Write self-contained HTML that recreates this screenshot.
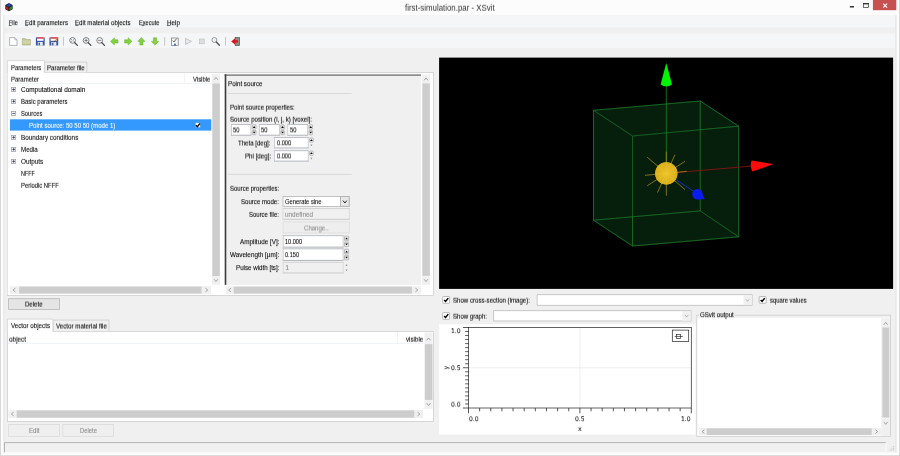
<!DOCTYPE html>
<html><head><meta charset="utf-8"><title>first-simulation.par - XSvit</title>
<style>
html,body{margin:0;padding:0;}
body{width:900px;height:456px;overflow:hidden;background:#f0f0f0;font-family:"Liberation Sans",sans-serif;}
#w{position:relative;width:900px;height:456px;overflow:hidden;background:#f0f0f0;}
.t{position:absolute;white-space:pre;line-height:10px;height:10px;-webkit-text-stroke:0.08px;}
.t span{display:inline-block;transform-origin:0 50%;}
#g{position:absolute;left:0;top:0;}
</style></head>
<body><div id="w">
<svg id="g" width="900" height="456" viewBox="0 0 900 456">
<rect x="0.00" y="0.00" width="900.00" height="15.40" fill="#fcfcfc"/>
<rect x="0.00" y="0.00" width="3.60" height="456.00" fill="#fcfcfc"/>
<rect x="896.30" y="0.00" width="3.70" height="456.00" fill="#fcfcfc"/>
<rect x="0.00" y="452.60" width="900.00" height="3.40" fill="#fcfcfc"/>
<rect x="0.00" y="0.00" width="0.80" height="456.00" fill="#cfcfcf"/>
<rect x="899.20" y="0.00" width="0.80" height="456.00" fill="#cfcfcf"/>
<rect x="0.00" y="455.30" width="900.00" height="0.70" fill="#cfcfcf"/>
<g transform="translate(8.95,7.1) scale(1.15)"><polygon points="0,-3.6 3.2,-1.8 3.2,1.8 0,3.6 -3.2,1.8 -3.2,-1.8" fill="#222"/><polygon points="0,-2.9 2.3,-1.6 0,-0.3 -2.3,-1.6" fill="#2346c8"/><polygon points="-2.6,-0.8 -0.5,0.5 -0.5,2.7 -2.6,1.4" fill="#c81e1e"/><polygon points="2.6,-0.8 0.5,0.5 0.5,2.7 2.6,1.4" fill="#19a519"/></g>
<rect x="872.90" y="0.00" width="23.40" height="10.20" fill="#c75050"/>
<path d="M883.2 3.7 L887.1 7.6 M887.1 3.7 L883.2 7.6" stroke="#fff" stroke-width="1.05" fill="none"/><rect x="863.4" y="3.6" width="5.2" height="3.8" fill="none" stroke="#333" stroke-width="0.7"/><rect x="863.1" y="3.1" width="5.8" height="1.3" fill="#333"/><rect x="849.9" y="6.0" width="4.1" height="1.5" fill="#333"/>
<rect x="3.60" y="15.40" width="892.70" height="12.20" fill="#f5f6f7"/>
<rect x="3.60" y="33.30" width="892.70" height="15.00" fill="#f5f6f7"/>
<rect x="3.20" y="15.40" width="1.40" height="437.20" fill="#eaeaea"/>
<rect x="895.00" y="15.40" width="1.80" height="437.20" fill="#e9e9e9"/>
<rect x="896.80" y="15.40" width="1.20" height="437.20" fill="#fcfcfc"/>
<rect x="8.80" y="25.45" width="2.80" height="0.60" fill="#222"/>
<rect x="25.10" y="25.45" width="2.90" height="0.60" fill="#222"/>
<rect x="75.40" y="25.45" width="2.90" height="0.60" fill="#222"/>
<rect x="141.60" y="25.45" width="2.80" height="0.60" fill="#222"/>
<rect x="166.90" y="25.45" width="3.50" height="0.60" fill="#222"/>
<path d="M9.6 37.6 h5.2 l2.2 2.2 v5.6 h-7.4z" fill="#fff" stroke="#9a9a9a" stroke-width="0.7"/><path d="M14.8 37.6 v2.2 h2.2" fill="none" stroke="#9a9a9a" stroke-width="0.6"/><path d="M22.4 38.6 h3 l0.8 1 h4.2 v5.4 h-8z" fill="#c6ca98" stroke="#a3a878" stroke-width="0.6"/><path d="M22.6 41.2 h7.8 M22.6 43 h7.8" stroke="#dfe2bd" stroke-width="0.7"/><rect x="35.90" y="37.2" width="8.8" height="8.4" rx="0.6" fill="#3a5cab"/><rect x="37.10" y="37.2" width="6.4" height="3.6" fill="#fff"/><rect x="37.10" y="37.2" width="6.4" height="1.5" fill="#e0333c"/><rect x="37.80" y="42.0" width="5.0" height="3.6" fill="#e6e9f1"/><rect x="38.60" y="42.7" width="1.3" height="2.5" fill="#44527a"/><rect x="49.40" y="37.2" width="8.8" height="8.4" rx="0.6" fill="#3a5cab"/><rect x="50.60" y="37.2" width="6.4" height="3.6" fill="#fff"/><rect x="50.60" y="37.2" width="6.4" height="1.5" fill="#e0333c"/><rect x="51.30" y="42.0" width="5.0" height="3.6" fill="#e6e9f1"/><rect x="52.10" y="42.7" width="1.3" height="2.5" fill="#44527a"/><path d="M54.6 41.6 L58.2 37.6" stroke="#c98a2b" stroke-width="1.3"/><path d="M54.2 42.2 L55.2 41.0" stroke="#333" stroke-width="1"/><rect x="63.2" y="37" width="0.7" height="8.6" fill="#b4b4b4"/><circle cx="72.60" cy="40.4" r="2.9" fill="#f4f6f8" stroke="#666" stroke-width="0.8"/><path d="M74.70 42.6 L77.40 45.4" stroke="#444" stroke-width="1.3" stroke-linecap="round"/><path d="M70.90 39 l1.2 1.2 M74.30 39 l-1.2 1.2 M70.90 41.9 l1.2 -1.2 M74.30 41.9 l-1.2 -1.2" stroke="#555" stroke-width="0.6"/><circle cx="86.10" cy="40.4" r="2.9" fill="#f4f6f8" stroke="#666" stroke-width="0.8"/><path d="M88.20 42.6 L90.90 45.4" stroke="#444" stroke-width="1.3" stroke-linecap="round"/><path d="M84.50 40.4 h3.2" stroke="#555" stroke-width="0.7"/><path d="M86.10 38.8 v3.2" stroke="#555" stroke-width="0.7"/><circle cx="99.70" cy="40.4" r="2.9" fill="#f4f6f8" stroke="#666" stroke-width="0.8"/><path d="M101.80 42.6 L104.50 45.4" stroke="#444" stroke-width="1.3" stroke-linecap="round"/><path d="M98.10 40.4 h3.2" stroke="#555" stroke-width="0.7"/><g transform="translate(114.4,41.4) rotate(0)"><path d="M-3.8 0 L0 -3.6 L0 -1.6 L3.6 -1.6 L3.6 1.6 L0 1.6 L0 3.6 Z" fill="#84d03e" stroke="#5cab25" stroke-width="0.45"/></g><g transform="translate(128.2,41.4) rotate(180)"><path d="M-3.8 0 L0 -3.6 L0 -1.6 L3.6 -1.6 L3.6 1.6 L0 1.6 L0 3.6 Z" fill="#84d03e" stroke="#5cab25" stroke-width="0.45"/></g><g transform="translate(141.4,41.4) rotate(90)"><path d="M-3.8 0 L0 -3.6 L0 -1.6 L3.6 -1.6 L3.6 1.6 L0 1.6 L0 3.6 Z" fill="#84d03e" stroke="#5cab25" stroke-width="0.45"/></g><g transform="translate(155.0,41.4) rotate(270)"><path d="M-3.8 0 L0 -3.6 L0 -1.6 L3.6 -1.6 L3.6 1.6 L0 1.6 L0 3.6 Z" fill="#84d03e" stroke="#5cab25" stroke-width="0.45"/></g><rect x="164.4" y="37" width="0.7" height="8.6" fill="#b4b4b4"/><rect x="171.6" y="38" width="6.6" height="7.4" fill="#f6f6f6" stroke="#777" stroke-width="0.7"/><path d="M172.8 40.6 l1.2 1.4 l2.6 -3.4" fill="none" stroke="#444" stroke-width="0.8"/><rect x="174.2" y="43.6" width="1.6" height="2.0" fill="#2a55c0"/><path d="M185.6 38.4 L191.4 41.4 L185.6 44.4 Z" fill="#ececec" stroke="#b0b0b0" stroke-width="0.7"/><rect x="199.4" y="39.0" width="4.8" height="4.8" fill="#dedede" stroke="#bdbdbd" stroke-width="0.6"/><circle cx="214.4" cy="40.0" r="2.5" fill="#eef2f6" stroke="#888" stroke-width="0.8"/><path d="M216.3 42 L219.4 45.2" stroke="#555" stroke-width="1.4" stroke-linecap="round"/><rect x="225.2" y="37" width="0.7" height="8.6" fill="#b4b4b4"/><rect x="235.2" y="37.6" width="4.2" height="7.8" fill="#8a8f86" stroke="#4c4c4c" stroke-width="0.7"/><path d="M231.2 41.4 L235 38.2 L235 40.2 L238 40.2 L238 42.6 L235 42.6 L235 44.6 Z" fill="#d9141e"/>
<rect x="7.00" y="72.20" width="426.70" height="223.50" fill="#fff"/><rect x="7.35" y="72.55" width="426.00" height="222.80" fill="none" stroke="#c7c7c7" stroke-width="0.7"/>
<rect x="44.40" y="61.70" width="42.80" height="10.60" fill="#f0f0f0"/><path d="M44.75 72.30 V62.05 H86.85 V72.30" fill="none" stroke="#c7c7c7" stroke-width="0.7"/>
<rect x="7.00" y="60.30" width="37.80" height="13.00" fill="#fff"/><path d="M7.35 73.30 V60.65 H44.45 V73.30" fill="none" stroke="#c7c7c7" stroke-width="0.7"/>
<rect x="7.70" y="72.90" width="212.50" height="222.10" fill="#fff"/>
<rect x="7.70" y="83.00" width="204.30" height="0.60" fill="#e6ecf3"/>
<rect x="184.50" y="73.50" width="0.60" height="9.50" fill="#e8edf3"/>
<rect x="11.25" y="87.15" width="4.80" height="4.70" fill="#fff"/><rect x="11.62" y="87.53" width="4.05" height="3.95" fill="none" stroke="#9d9d9d" stroke-width="0.75"/>
<path d="M12.30 89.50 h2.7" stroke="#1c2a55" stroke-width="0.75"/><path d="M13.65 88.15 v2.7" stroke="#1c2a55" stroke-width="0.75"/>
<rect x="11.25" y="99.05" width="4.80" height="4.70" fill="#fff"/><rect x="11.62" y="99.43" width="4.05" height="3.95" fill="none" stroke="#9d9d9d" stroke-width="0.75"/>
<path d="M12.30 101.40 h2.7" stroke="#1c2a55" stroke-width="0.75"/><path d="M13.65 100.05 v2.7" stroke="#1c2a55" stroke-width="0.75"/>
<rect x="11.25" y="111.05" width="4.80" height="4.70" fill="#fff"/><rect x="11.62" y="111.43" width="4.05" height="3.95" fill="none" stroke="#9d9d9d" stroke-width="0.75"/>
<path d="M12.30 113.40 h2.7" stroke="#1c2a55" stroke-width="0.75"/>
<rect x="10.00" y="119.30" width="201.30" height="11.30" fill="#3399ff"/>
<rect x="195.30" y="122.60" width="5.20" height="5.10" rx="0.7" fill="#fff" stroke="#3f92ec" stroke-width="0.8"/>
<path d="M195.90 125.30 L197.35 126.70 L200.00 123.35" fill="none" stroke="#000" stroke-width="1.3"/>
<rect x="11.25" y="135.05" width="4.80" height="4.70" fill="#fff"/><rect x="11.62" y="135.43" width="4.05" height="3.95" fill="none" stroke="#9d9d9d" stroke-width="0.75"/>
<path d="M12.30 137.40 h2.7" stroke="#1c2a55" stroke-width="0.75"/><path d="M13.65 136.05 v2.7" stroke="#1c2a55" stroke-width="0.75"/>
<rect x="11.25" y="147.05" width="4.80" height="4.70" fill="#fff"/><rect x="11.62" y="147.43" width="4.05" height="3.95" fill="none" stroke="#9d9d9d" stroke-width="0.75"/>
<path d="M12.30 149.40 h2.7" stroke="#1c2a55" stroke-width="0.75"/><path d="M13.65 148.05 v2.7" stroke="#1c2a55" stroke-width="0.75"/>
<rect x="11.25" y="159.05" width="4.80" height="4.70" fill="#fff"/><rect x="11.62" y="159.43" width="4.05" height="3.95" fill="none" stroke="#9d9d9d" stroke-width="0.75"/>
<path d="M12.30 161.40 h2.7" stroke="#1c2a55" stroke-width="0.75"/><path d="M13.65 160.05 v2.7" stroke="#1c2a55" stroke-width="0.75"/>
<rect x="212.00" y="74.00" width="8.00" height="210.80" fill="#f0f0f0"/>
<rect x="212.40" y="83.40" width="7.40" height="192.60" fill="#cdcdcd"/>
<path d="M214.10 79.78 L216.00 77.42 L217.90 79.78" fill="none" stroke="#a2a2a2" stroke-width="1.0"/><path d="M214.10 279.22 L216.00 281.58 L217.90 279.22" fill="none" stroke="#a2a2a2" stroke-width="1.0"/>
<rect x="10.00" y="286.30" width="201.00" height="7.50" fill="#f0f0f0"/>
<rect x="19.20" y="286.60" width="182.30" height="7.00" fill="#cdcdcd"/>
<path d="M15.38 288.15 L13.02 290.05 L15.38 291.95" fill="none" stroke="#a2a2a2" stroke-width="1.0"/><path d="M205.42 288.15 L207.78 290.05 L205.42 291.95" fill="none" stroke="#a2a2a2" stroke-width="1.0"/>
<rect x="220.20" y="72.90" width="4.40" height="222.10" fill="#fff"/>
<rect x="224.60" y="73.60" width="197.40" height="221.40" fill="#f0f0f0"/>
<rect x="224.60" y="74.30" width="196.40" height="1.70" fill="#8e8e8e"/>
<rect x="224.70" y="74.30" width="1.60" height="210.50" fill="#3c3c3c"/>
<rect x="421.00" y="73.60" width="1.00" height="211.40" fill="#fff"/>
<rect x="228.00" y="93.30" width="123.70" height="0.60" fill="#c9c9c9"/>
<rect x="231.00" y="124.00" width="20.30" height="11.80" fill="#fff"/><rect x="231.00" y="124.00" width="20.30" height="0.85" fill="#b1b4ba"/><rect x="231.00" y="134.70" width="20.30" height="1.1" fill="#b6b9bf"/><rect x="231.00" y="124.00" width="0.8" height="11.80" fill="#c0c3c9"/><rect x="250.50" y="124.00" width="0.8" height="11.80" fill="#c0c3c9"/>
<rect x="252.30" y="124.80" width="3.70" height="4.40" rx="0.5" fill="#eaeaea" stroke="#a6a6a6" stroke-width="0.7"/>
<rect x="252.30" y="130.50" width="3.70" height="4.20" rx="0.5" fill="#eaeaea" stroke="#a6a6a6" stroke-width="0.7"/>
<path d="M252.85 127.90 L254.15 126.10 L255.45 127.90Z" fill="#000"/><path d="M252.85 131.70 L254.15 133.50 L255.45 131.70Z" fill="#000"/>
<rect x="259.20" y="124.00" width="20.60" height="11.80" fill="#fff"/><rect x="259.20" y="124.00" width="20.60" height="0.85" fill="#b1b4ba"/><rect x="259.20" y="134.70" width="20.60" height="1.1" fill="#b6b9bf"/><rect x="259.20" y="124.00" width="0.8" height="11.80" fill="#c0c3c9"/><rect x="279.00" y="124.00" width="0.8" height="11.80" fill="#c0c3c9"/>
<rect x="280.80" y="124.80" width="3.50" height="4.40" rx="0.5" fill="#eaeaea" stroke="#a6a6a6" stroke-width="0.7"/>
<rect x="280.80" y="130.50" width="3.50" height="4.20" rx="0.5" fill="#eaeaea" stroke="#a6a6a6" stroke-width="0.7"/>
<path d="M281.25 127.90 L282.55 126.10 L283.85 127.90Z" fill="#000"/><path d="M281.25 131.70 L282.55 133.50 L283.85 131.70Z" fill="#000"/>
<rect x="287.40" y="124.00" width="20.60" height="11.80" fill="#fff"/><rect x="287.40" y="124.00" width="20.60" height="0.85" fill="#b1b4ba"/><rect x="287.40" y="134.70" width="20.60" height="1.1" fill="#b6b9bf"/><rect x="287.40" y="124.00" width="0.8" height="11.80" fill="#c0c3c9"/><rect x="307.20" y="124.00" width="0.8" height="11.80" fill="#c0c3c9"/>
<rect x="309.00" y="124.80" width="3.50" height="4.40" rx="0.5" fill="#eaeaea" stroke="#a6a6a6" stroke-width="0.7"/>
<rect x="309.00" y="130.50" width="3.50" height="4.20" rx="0.5" fill="#eaeaea" stroke="#a6a6a6" stroke-width="0.7"/>
<path d="M309.45 127.90 L310.75 126.10 L312.05 127.90Z" fill="#000"/><path d="M309.45 131.70 L310.75 133.50 L312.05 131.70Z" fill="#000"/>
<rect x="274.10" y="137.20" width="34.50" height="11.30" fill="#fff"/><rect x="274.10" y="137.20" width="34.50" height="0.85" fill="#b1b4ba"/><rect x="274.10" y="147.40" width="34.50" height="1.1" fill="#b6b9bf"/><rect x="274.10" y="137.20" width="0.8" height="11.30" fill="#c0c3c9"/><rect x="307.80" y="137.20" width="0.8" height="11.30" fill="#c0c3c9"/>
<rect x="309.60" y="138.00" width="3.60" height="4.15" rx="0.5" fill="#eaeaea" stroke="#a6a6a6" stroke-width="0.7"/>
<path d="M310.10 140.97 L311.40 139.17 L312.70 140.97Z" fill="#000"/><path d="M310.40 144.52 L311.40 146.32 L312.40 144.52Z" fill="#8e8e8e"/>
<rect x="274.10" y="150.30" width="34.50" height="11.40" fill="#fff"/><rect x="274.10" y="150.30" width="34.50" height="0.85" fill="#b1b4ba"/><rect x="274.10" y="160.60" width="34.50" height="1.1" fill="#b6b9bf"/><rect x="274.10" y="150.30" width="0.8" height="11.40" fill="#c0c3c9"/><rect x="307.80" y="150.30" width="0.8" height="11.40" fill="#c0c3c9"/>
<rect x="309.60" y="151.10" width="3.60" height="4.20" rx="0.5" fill="#eaeaea" stroke="#a6a6a6" stroke-width="0.7"/>
<path d="M310.10 154.10 L311.40 152.30 L312.70 154.10Z" fill="#000"/><path d="M310.40 157.70 L311.40 159.50 L312.40 157.70Z" fill="#8e8e8e"/>
<rect x="228.00" y="173.90" width="123.70" height="0.60" fill="#c9c9c9"/>
<rect x="282.60" y="196.00" width="67.10" height="10.80" fill="#fff"/><rect x="283.00" y="196.40" width="66.30" height="10.00" fill="none" stroke="#b2b2b2" stroke-width="0.8"/>
<rect x="340.20" y="196.30" width="9.30" height="10.30" fill="#e8e8e8"/><rect x="340.55" y="196.65" width="8.60" height="9.60" fill="none" stroke="#a4a4a4" stroke-width="0.7"/>
<path d="M343.00 200.62 L344.90 202.98 L346.80 200.62" fill="none" stroke="#222" stroke-width="1.0"/>
<rect x="282.60" y="208.20" width="67.10" height="11.70" fill="#f0f0f0"/><rect x="282.60" y="208.20" width="67.10" height="0.85" fill="#cfcfcf"/><rect x="282.60" y="218.80" width="67.10" height="1.1" fill="#cdcdcd"/><rect x="282.60" y="208.20" width="0.8" height="11.70" fill="#d6d6d6"/><rect x="348.90" y="208.20" width="0.8" height="11.70" fill="#d6d6d6"/>
<rect x="282.70" y="221.60" width="67.00" height="11.70" fill="#eeeeee"/><rect x="283.05" y="221.95" width="66.30" height="11.00" fill="none" stroke="#dadada" stroke-width="0.7"/>
<rect x="282.80" y="235.30" width="60.70" height="12.40" fill="#fff"/><rect x="282.80" y="235.30" width="60.70" height="0.85" fill="#b1b4ba"/><rect x="282.80" y="246.60" width="60.70" height="1.1" fill="#b6b9bf"/><rect x="282.80" y="235.30" width="0.8" height="12.40" fill="#c0c3c9"/><rect x="342.70" y="235.30" width="0.8" height="12.40" fill="#c0c3c9"/>
<rect x="344.50" y="236.10" width="4.10" height="4.70" rx="0.5" fill="#eaeaea" stroke="#a6a6a6" stroke-width="0.7"/>
<rect x="344.50" y="242.10" width="4.10" height="4.50" rx="0.5" fill="#eaeaea" stroke="#a6a6a6" stroke-width="0.7"/>
<path d="M345.25 239.35 L346.55 237.55 L347.85 239.35Z" fill="#000"/><path d="M345.25 243.45 L346.55 245.25 L347.85 243.45Z" fill="#000"/>
<rect x="282.80" y="248.40" width="60.70" height="12.60" fill="#fff"/><rect x="282.80" y="248.40" width="60.70" height="0.85" fill="#b1b4ba"/><rect x="282.80" y="259.90" width="60.70" height="1.1" fill="#b6b9bf"/><rect x="282.80" y="248.40" width="0.8" height="12.60" fill="#c0c3c9"/><rect x="342.70" y="248.40" width="0.8" height="12.60" fill="#c0c3c9"/>
<rect x="344.50" y="249.20" width="4.10" height="4.80" rx="0.5" fill="#eaeaea" stroke="#a6a6a6" stroke-width="0.7"/>
<rect x="344.50" y="255.30" width="4.10" height="4.60" rx="0.5" fill="#eaeaea" stroke="#a6a6a6" stroke-width="0.7"/>
<path d="M345.25 252.50 L346.55 250.70 L347.85 252.50Z" fill="#000"/><path d="M345.25 256.70 L346.55 258.50 L347.85 256.70Z" fill="#000"/>
<rect x="282.80" y="261.90" width="60.70" height="11.60" fill="#f0f0f0"/><rect x="282.80" y="261.90" width="60.70" height="0.85" fill="#cfcfcf"/><rect x="282.80" y="272.40" width="60.70" height="1.1" fill="#cdcdcd"/><rect x="282.80" y="261.90" width="0.8" height="11.60" fill="#d6d6d6"/><rect x="342.70" y="261.90" width="0.8" height="11.60" fill="#d6d6d6"/>
<path d="M345.55 265.75 L346.55 263.95 L347.55 265.75Z" fill="#8e8e8e"/><path d="M345.55 269.45 L346.55 271.25 L347.55 269.45Z" fill="#8e8e8e"/>
<rect x="422.00" y="73.60" width="11.00" height="221.40" fill="#fff"/>
<rect x="224.60" y="285.00" width="208.40" height="10.00" fill="#fff"/>
<rect x="422.00" y="74.50" width="8.00" height="210.30" fill="#f0f0f0"/>
<rect x="422.40" y="83.40" width="7.40" height="192.40" fill="#cdcdcd"/>
<path d="M424.10 80.28 L426.00 77.92 L427.90 80.28" fill="none" stroke="#a2a2a2" stroke-width="1.0"/><path d="M424.10 279.22 L426.00 281.58 L427.90 279.22" fill="none" stroke="#a2a2a2" stroke-width="1.0"/>
<rect x="225.60" y="286.30" width="195.40" height="7.50" fill="#f0f0f0"/>
<rect x="233.70" y="286.60" width="178.30" height="7.00" fill="#cdcdcd"/>
<path d="M230.98 288.15 L228.62 290.05 L230.98 291.95" fill="none" stroke="#a2a2a2" stroke-width="1.0"/><path d="M415.42 288.15 L417.78 290.05 L415.42 291.95" fill="none" stroke="#a2a2a2" stroke-width="1.0"/>
<rect x="8.30" y="298.40" width="51.40" height="11.30" fill="#e5e5e5"/><rect x="8.65" y="298.75" width="50.70" height="10.60" fill="none" stroke="#b0b0b0" stroke-width="0.7"/>
<rect x="7.00" y="331.00" width="426.90" height="90.80" fill="#fff"/><rect x="7.35" y="331.35" width="426.20" height="90.10" fill="none" stroke="#c7c7c7" stroke-width="0.7"/>
<rect x="52.80" y="319.70" width="56.50" height="11.40" fill="#f0f0f0"/><path d="M53.15 331.10 V320.05 H108.95 V331.10" fill="none" stroke="#c7c7c7" stroke-width="0.7"/>
<rect x="7.00" y="318.70" width="46.20" height="13.40" fill="#fff"/><path d="M7.35 332.10 V319.05 H52.85 V332.10" fill="none" stroke="#c7c7c7" stroke-width="0.7"/>
<rect x="7.70" y="343.10" width="416.80" height="0.60" fill="#e6ecf3"/>
<rect x="397.30" y="332.00" width="0.60" height="11.10" fill="#e8edf3"/>
<rect x="424.50" y="332.50" width="8.10" height="76.30" fill="#f0f0f0"/>
<rect x="424.90" y="344.20" width="7.50" height="55.70" fill="#cdcdcd"/>
<path d="M426.65 340.28 L428.55 337.92 L430.45 340.28" fill="none" stroke="#a2a2a2" stroke-width="1.0"/><path d="M426.65 403.22 L428.55 405.58 L430.45 403.22" fill="none" stroke="#a2a2a2" stroke-width="1.0"/>
<rect x="8.30" y="410.10" width="414.80" height="7.80" fill="#f0f0f0"/>
<rect x="16.70" y="410.40" width="397.50" height="7.30" fill="#cdcdcd"/>
<path d="M13.68 412.10 L11.32 414.00 L13.68 415.90" fill="none" stroke="#a2a2a2" stroke-width="1.0"/><path d="M417.52 412.10 L419.88 414.00 L417.52 415.90" fill="none" stroke="#a2a2a2" stroke-width="1.0"/>
<rect x="8.30" y="424.20" width="51.40" height="12.50" fill="#efefef"/><rect x="8.65" y="424.55" width="50.70" height="11.80" fill="none" stroke="#d9d9d9" stroke-width="0.7"/>
<rect x="62.50" y="424.20" width="51.30" height="12.50" fill="#efefef"/><rect x="62.85" y="424.55" width="50.60" height="11.80" fill="none" stroke="#d9d9d9" stroke-width="0.7"/>
<path d="M4.5 452.4 V442.6 H886" fill="none" stroke="#a5a5a5" stroke-width="0.8"/><path d="M4.5 452.3 H886 V442.6" fill="none" stroke="#fbfbfb" stroke-width="0.8"/>
<rect x="893.3" y="446.0" width="0.9" height="0.9" fill="#b8b8b8"/><rect x="893.3" y="447.8" width="0.9" height="0.9" fill="#b8b8b8"/><rect x="893.3" y="449.6" width="0.9" height="0.9" fill="#b8b8b8"/><rect x="891.5" y="447.8" width="0.9" height="0.9" fill="#b8b8b8"/><rect x="891.5" y="449.6" width="0.9" height="0.9" fill="#b8b8b8"/><rect x="889.7" y="449.6" width="0.9" height="0.9" fill="#b8b8b8"/>
<rect x="439.10" y="57.60" width="454.00" height="231.30" fill="#000"/>
<defs><radialGradient id="sg" cx="0.5" cy="0.5" r="0.5"><stop offset="0" stop-color="#ecc428" stop-opacity="0.9"/><stop offset="1" stop-color="#d9ae1c" stop-opacity="0.9"/></radialGradient></defs><polygon points="593.5,110.3 700.2,101.0 738.7,126.2 738.7,236.8 632.5,246.0 593.5,220.2" fill="#06190b" stroke="none" stroke-width="0.6" fill-opacity="1" stroke-linejoin="round"/><polygon points="593.5,110.3 700.2,101.0 738.7,126.2 632.5,136.0" fill="#0a2a12" stroke="#1c7a2b" stroke-width="0.55" fill-opacity="0.18" stroke-linejoin="round"/><polygon points="593.5,220.2 700.2,210.9 738.7,236.8 632.5,246.0" fill="#0a2a12" stroke="#1c7a2b" stroke-width="0.55" fill-opacity="0.18" stroke-linejoin="round"/><polygon points="593.5,110.3 632.5,136.0 632.5,246.0 593.5,220.2" fill="#0a2a12" stroke="#1c7a2b" stroke-width="0.55" fill-opacity="0.18" stroke-linejoin="round"/><polygon points="700.2,101.0 738.7,126.2 738.7,236.8 700.2,210.9" fill="#0a2a12" stroke="#1c7a2b" stroke-width="0.55" fill-opacity="0.18" stroke-linejoin="round"/><polygon points="632.5,136.0 738.7,126.2 738.7,236.8 632.5,246.0" fill="#0a2a12" stroke="#1c7a2b" stroke-width="0.55" fill-opacity="0.18" stroke-linejoin="round"/><polygon points="593.5,110.3 700.2,101.0 700.2,210.9 593.5,220.2" fill="#0a2a12" stroke="#1c7a2b" stroke-width="0.55" fill-opacity="0.18" stroke-linejoin="round"/><path d="M666.3 173.4 L666.3 85" stroke="#0c8a12" stroke-width="0.8"/><path d="M666.3 63.0 L660.6 84.6 Q666.3 88.6 672.0 84.6 Z" fill="#00f400"/><path d="M666.3 173.4 L751.5 166.1" stroke="#9a1010" stroke-width="0.8"/><path d="M773.4 164.1 L751.6 160.4 Q749.6 166 752.4 171.6 Z" fill="#ff0a0a"/><path d="M666.3 173.4 L695 192.2" stroke="#1030c0" stroke-width="1.0"/><circle cx="697.4" cy="194.2" r="5.2" fill="#0a1cf0"/><path d="M704.8 198.9 L700.6 190.2 L696.8 199.4 Z" fill="#0a1cf0"/><path d="M666.3 173.4 L647.2 157.2" stroke="#b8941a" stroke-width="0.7"/><path d="M666.3 173.4 L685.0 189.7" stroke="#b8941a" stroke-width="0.7"/><path d="M666.3 173.4 L666.3 151.7" stroke="#b8941a" stroke-width="0.7"/><path d="M666.3 173.4 L666.3 195.8" stroke="#b8941a" stroke-width="0.7"/><path d="M666.3 173.4 L675.0 154.7" stroke="#b8941a" stroke-width="0.7"/><path d="M666.3 173.4 L657.5 192.5" stroke="#b8941a" stroke-width="0.7"/><path d="M666.3 173.4 L685.0 161.3" stroke="#b8941a" stroke-width="0.7"/><path d="M666.3 173.4 L647.2 185.8" stroke="#b8941a" stroke-width="0.7"/><path d="M666.3 173.4 L686.7 171.3" stroke="#b8941a" stroke-width="0.7"/><path d="M666.3 173.4 L645.0 175.3" stroke="#b8941a" stroke-width="0.7"/><circle cx="666.3" cy="173.4" r="11.1" fill="#e3b81f"/><circle cx="666.3" cy="173.4" r="11.1" fill="url(#sg)"/><path d="M666.3 173.4 L656.8 165.3" stroke="#f0cc3c" stroke-width="0.6" stroke-opacity="0.55"/><path d="M666.3 173.4 L675.6 181.6" stroke="#f0cc3c" stroke-width="0.6" stroke-opacity="0.55"/><path d="M666.3 173.4 L666.3 162.6" stroke="#f0cc3c" stroke-width="0.6" stroke-opacity="0.55"/><path d="M666.3 173.4 L666.3 184.6" stroke="#f0cc3c" stroke-width="0.6" stroke-opacity="0.55"/><path d="M666.3 173.4 L670.6 164.1" stroke="#f0cc3c" stroke-width="0.6" stroke-opacity="0.55"/><path d="M666.3 173.4 L661.9 183.0" stroke="#f0cc3c" stroke-width="0.6" stroke-opacity="0.55"/><path d="M666.3 173.4 L675.6 167.3" stroke="#f0cc3c" stroke-width="0.6" stroke-opacity="0.55"/><path d="M666.3 173.4 L656.8 179.6" stroke="#f0cc3c" stroke-width="0.6" stroke-opacity="0.55"/><path d="M666.3 173.4 L676.5 172.3" stroke="#f0cc3c" stroke-width="0.6" stroke-opacity="0.55"/><path d="M666.3 173.4 L655.6 174.3" stroke="#f0cc3c" stroke-width="0.6" stroke-opacity="0.55"/>
<rect x="442.70" y="296.50" width="6.90" height="6.80" rx="0.7" fill="#fff" stroke="#ababab" stroke-width="0.8"/>
<path d="M444.15 300.05 L445.60 301.45 L448.25 298.10" fill="none" stroke="#000" stroke-width="1.5"/>
<rect x="536.70" y="294.30" width="215.80" height="11.40" fill="#fff"/><rect x="537.10" y="294.70" width="215.00" height="10.60" fill="none" stroke="#b9b9b9" stroke-width="0.8"/>
<rect x="743.50" y="295.20" width="8.30" height="9.70" fill="#f0f0f0"/>
<path d="M745.90 299.15 L747.60 301.25 L749.30 299.15" fill="none" stroke="#a0a0a0" stroke-width="0.7"/>
<rect x="759.20" y="296.50" width="6.90" height="6.80" rx="0.7" fill="#fff" stroke="#ababab" stroke-width="0.8"/>
<path d="M760.65 300.05 L762.10 301.45 L764.75 298.10" fill="none" stroke="#000" stroke-width="1.5"/>
<rect x="442.70" y="312.60" width="6.90" height="6.70" rx="0.7" fill="#fff" stroke="#ababab" stroke-width="0.8"/>
<path d="M444.15 316.10 L445.60 317.50 L448.25 314.15" fill="none" stroke="#000" stroke-width="1.5"/>
<rect x="493.30" y="310.30" width="198.10" height="11.10" fill="#fff"/><rect x="493.70" y="310.70" width="197.30" height="10.30" fill="none" stroke="#b9b9b9" stroke-width="0.8"/>
<rect x="682.50" y="311.00" width="8.20" height="9.70" fill="#f0f0f0"/>
<path d="M684.90 314.95 L686.60 317.05 L688.30 314.95" fill="none" stroke="#a0a0a0" stroke-width="0.7"/>
<rect x="439.10" y="324.20" width="256.50" height="110.30" fill="#fff"/>
<path d="M579.90 327.5 V408.0 M468.5 367.75 H691.3" stroke="#e6e6e6" stroke-width="0.6"/><rect x="468.5" y="327.5" width="222.79999999999995" height="80.5" fill="none" stroke="#2e2e2e" stroke-width="0.75"/><path d="M468.5 327.50 h-5.6 M468.50 408.0 v5.3 M468.5 331.52 h-3.3 M479.64 408.0 v3.3 M468.5 335.55 h-3.3 M490.78 408.0 v3.3 M468.5 339.57 h-3.3 M501.92 408.0 v3.3 M468.5 343.60 h-3.3 M513.06 408.0 v3.3 M468.5 347.62 h-3.3 M524.20 408.0 v3.3 M468.5 351.65 h-3.3 M535.34 408.0 v3.3 M468.5 355.68 h-3.3 M546.48 408.0 v3.3 M468.5 359.70 h-3.3 M557.62 408.0 v3.3 M468.5 363.73 h-3.3 M568.76 408.0 v3.3 M468.5 367.75 h-5.6 M579.90 408.0 v5.3 M468.5 371.77 h-3.3 M591.04 408.0 v3.3 M468.5 375.80 h-3.3 M602.18 408.0 v3.3 M468.5 379.82 h-3.3 M613.32 408.0 v3.3 M468.5 383.85 h-3.3 M624.46 408.0 v3.3 M468.5 387.88 h-3.3 M635.60 408.0 v3.3 M468.5 391.90 h-3.3 M646.74 408.0 v3.3 M468.5 395.93 h-3.3 M657.88 408.0 v3.3 M468.5 399.95 h-3.3 M669.02 408.0 v3.3 M468.5 403.98 h-3.3 M680.16 408.0 v3.3 M468.5 408.00 h-5.6 M691.30 408.0 v5.3" stroke="#222" stroke-width="0.75" fill="none"/><rect x="672.3" y="330.1" width="16.4" height="11.5" fill="#fff" stroke="#222" stroke-width="0.7"/><rect x="676.55" y="334.45" width="3.9" height="3.9" fill="none" stroke="#2a2a2a" stroke-width="0.7"/><path d="M674.8 336.45 h8" stroke="#2a2a2a" stroke-width="0.7"/>
<rect x="696.85" y="315.15" width="193.60" height="121.10" fill="none" stroke="#c7c7c7" stroke-width="0.7"/>
<rect x="697.40" y="317.80" width="192.60" height="118.10" fill="#fff"/>
<rect x="699.20" y="313.00" width="35.00" height="4.00" fill="#f0f0f0"/>
<rect x="881.20" y="318.30" width="8.80" height="117.60" fill="#f0f0f0"/>
<rect x="882.00" y="319.00" width="7.40" height="108.50" fill="#f0f0f0"/>
<rect x="882.40" y="327.50" width="6.80" height="90.00" fill="#cdcdcd"/>
<path d="M883.80 324.78 L885.70 322.42 L887.60 324.78" fill="none" stroke="#a2a2a2" stroke-width="1.0"/><path d="M883.80 421.92 L885.70 424.28 L887.60 421.92" fill="none" stroke="#a2a2a2" stroke-width="1.0"/>
<rect x="699.00" y="428.00" width="182.00" height="7.20" fill="#f0f0f0"/>
<rect x="706.70" y="428.30" width="165.00" height="6.70" fill="#cdcdcd"/>
<path d="M704.38 429.70 L702.02 431.60 L704.38 433.50" fill="none" stroke="#a2a2a2" stroke-width="1.0"/><path d="M875.42 429.70 L877.78 431.60 L875.42 433.50" fill="none" stroke="#a2a2a2" stroke-width="1.0"/>
</svg>
<div class="t" style="left:405px;top:2px;padding-left:0.35px;font-size:8.6px;color:#333;transform:translate3d(0,0.69px,0) rotateX(0.5deg);-webkit-text-stroke:0;"><span style="transform:scaleX(0.9162)">first-simulation.par - XSvit</span></div>
<div class="t" style="left:8px;top:18px;padding-left:0.70px;font-size:7.0px;color:#000;transform:translate3d(0,0.17px,0) rotateX(0.5deg);"><span style="transform:scaleX(0.7801)">File</span></div>
<div class="t" style="left:25px;top:18px;padding-left:0.00px;font-size:7.0px;color:#000;transform:translate3d(0,0.17px,0) rotateX(0.5deg);"><span style="transform:scaleX(0.8701)">Edit parameters</span></div>
<div class="t" style="left:75px;top:18px;padding-left:0.30px;font-size:7.0px;color:#000;transform:translate3d(0,0.17px,0) rotateX(0.5deg);"><span style="transform:scaleX(0.8805)">Edit material objects</span></div>
<div class="t" style="left:138px;top:18px;padding-left:0.70px;font-size:7.0px;color:#000;transform:translate3d(0,0.17px,0) rotateX(0.5deg);"><span style="transform:scaleX(0.8104)">Execute</span></div>
<div class="t" style="left:166px;top:18px;padding-left:0.70px;font-size:7.0px;color:#000;transform:translate3d(0,0.17px,0) rotateX(0.5deg);"><span style="transform:scaleX(0.9024)">Help</span></div>
<div class="t" style="left:11px;top:63px;padding-left:0.00px;font-size:7.0px;color:#000;transform:translate3d(0,0.17px,0) rotateX(0.5deg);"><span style="transform:scaleX(0.8373)">Parameters</span></div>
<div class="t" style="left:47px;top:63px;padding-left:0.30px;font-size:7.0px;color:#000;transform:translate3d(0,0.27px,0) rotateX(0.5deg);"><span style="transform:scaleX(0.8651)">Parameter file</span></div>
<div class="t" style="left:10px;top:74px;padding-left:0.70px;font-size:7.0px;color:#000;transform:translate3d(0,0.67px,0) rotateX(0.5deg);"><span style="transform:scaleX(0.8566)">Parameter</span></div>
<div class="t" style="left:193px;top:74px;padding-left:0.00px;font-size:7.0px;color:#000;transform:translate3d(0,0.67px,0) rotateX(0.5deg);"><span style="transform:scaleX(0.8439)">Visible</span></div>
<div class="t" style="left:20px;top:84px;padding-left:0.70px;font-size:7.0px;color:#000;transform:translate3d(0,0.97px,0) rotateX(0.5deg);"><span style="transform:scaleX(0.9180)">Computational domain</span></div>
<div class="t" style="left:20px;top:96px;padding-left:0.70px;font-size:7.0px;color:#000;transform:translate3d(0,0.87px,0) rotateX(0.5deg);"><span style="transform:scaleX(0.8555)">Basic parameters</span></div>
<div class="t" style="left:20px;top:108px;padding-left:0.70px;font-size:7.0px;color:#000;transform:translate3d(0,0.87px,0) rotateX(0.5deg);"><span style="transform:scaleX(0.8292)">Sources</span></div>
<div class="t" style="left:28px;top:120px;padding-left:0.70px;font-size:7.0px;color:#fff;transform:translate3d(0,0.87px,0) rotateX(0.5deg);"><span style="transform:scaleX(0.8629)">Point source: 50 50 50 (mode 1)</span></div>
<div class="t" style="left:20px;top:132px;padding-left:0.70px;font-size:7.0px;color:#000;transform:translate3d(0,0.87px,0) rotateX(0.5deg);"><span style="transform:scaleX(0.9033)">Boundary conditions</span></div>
<div class="t" style="left:20px;top:144px;padding-left:0.70px;font-size:7.0px;color:#000;transform:translate3d(0,0.87px,0) rotateX(0.5deg);"><span style="transform:scaleX(0.8806)">Media</span></div>
<div class="t" style="left:20px;top:156px;padding-left:0.70px;font-size:7.0px;color:#000;transform:translate3d(0,0.87px,0) rotateX(0.5deg);"><span style="transform:scaleX(0.9096)">Outputs</span></div>
<div class="t" style="left:20px;top:168px;padding-left:0.70px;font-size:7.0px;color:#000;transform:translate3d(0,0.87px,0) rotateX(0.5deg);"><span style="transform:scaleX(0.7714)">NFFF</span></div>
<div class="t" style="left:20px;top:180px;padding-left:0.70px;font-size:7.0px;color:#000;transform:translate3d(0,0.77px,0) rotateX(0.5deg);"><span style="transform:scaleX(0.8377)">Periodic NFFF</span></div>
<div class="t" style="left:228px;top:79px;padding-left:0.00px;font-size:7.0px;color:#000;transform:translate3d(0,0.17px,0) rotateX(0.5deg);"><span style="transform:scaleX(0.8864)">Point source</span></div>
<div class="t" style="left:230px;top:102px;padding-left:0.00px;font-size:7.0px;color:#000;transform:translate3d(0,0.67px,0) rotateX(0.5deg);"><span style="transform:scaleX(0.8751)">Point source properties:</span></div>
<div class="t" style="left:230px;top:114px;padding-left:0.00px;font-size:7.0px;color:#000;transform:translate3d(0,0.67px,0) rotateX(0.5deg);"><span style="transform:scaleX(0.8782)">Source position (i, j, k) [voxel]:</span></div>
<div class="t" style="left:233px;top:125px;padding-left:0.10px;font-size:7.0px;color:#000;transform:translate3d(0,0.32px,0) rotateX(0.5deg);"><span style="transform:scaleX(0.8208)">50</span></div>
<div class="t" style="left:261px;top:125px;padding-left:0.30px;font-size:7.0px;color:#000;transform:translate3d(0,0.32px,0) rotateX(0.5deg);"><span style="transform:scaleX(0.8208)">50</span></div>
<div class="t" style="left:289px;top:125px;padding-left:0.50px;font-size:7.0px;color:#000;transform:translate3d(0,0.32px,0) rotateX(0.5deg);"><span style="transform:scaleX(0.8208)">50</span></div>
<div class="t" style="left:238px;top:138px;padding-left:0.30px;font-size:7.0px;color:#000;transform:translate3d(0,0.47px,0) rotateX(0.5deg);"><span style="transform:scaleX(0.8699)">Theta [deg]:</span></div>
<div class="t" style="left:276px;top:138px;padding-left:0.80px;font-size:7.0px;color:#000;transform:translate3d(0,0.27px,0) rotateX(0.5deg);"><span style="transform:scaleX(0.8043)">0.000</span></div>
<div class="t" style="left:244px;top:151px;padding-left:0.70px;font-size:7.0px;color:#000;transform:translate3d(0,0.47px,0) rotateX(0.5deg);"><span style="transform:scaleX(0.8824)">Phi [deg]:</span></div>
<div class="t" style="left:276px;top:151px;padding-left:0.80px;font-size:7.0px;color:#000;transform:translate3d(0,0.42px,0) rotateX(0.5deg);"><span style="transform:scaleX(0.8043)">0.000</span></div>
<div class="t" style="left:230px;top:183px;padding-left:0.00px;font-size:7.0px;color:#000;transform:translate3d(0,0.77px,0) rotateX(0.5deg);"><span style="transform:scaleX(0.8601)">Source properties:</span></div>
<div class="t" style="left:241px;top:197px;padding-left:0.30px;font-size:7.0px;color:#000;transform:translate3d(0,0.07px,0) rotateX(0.5deg);"><span style="transform:scaleX(0.8694)">Source mode:</span></div>
<div class="t" style="left:284px;top:197px;padding-left:0.70px;font-size:7.0px;color:#000;transform:translate3d(0,0.07px,0) rotateX(0.5deg);"><span style="transform:scaleX(0.8321)">Generate sine</span></div>
<div class="t" style="left:249px;top:209px;padding-left:0.30px;font-size:7.0px;color:#000;transform:translate3d(0,0.87px,0) rotateX(0.5deg);"><span style="transform:scaleX(0.8535)">Source file:</span></div>
<div class="t" style="left:284px;top:209px;padding-left:0.90px;font-size:7.0px;color:#8a8a8a;transform:translate3d(0,0.77px,0) rotateX(0.5deg);"><span style="transform:scaleX(0.9134)">undefined</span></div>
<div class="t" style="left:303px;top:223px;padding-left:0.70px;font-size:7.0px;color:#8a8a8a;transform:translate3d(0,0.47px,0) rotateX(0.5deg);"><span style="transform:scaleX(0.8655)">Change..</span></div>
<div class="t" style="left:239px;top:237px;padding-left:0.70px;font-size:7.0px;color:#000;transform:translate3d(0,0.17px,0) rotateX(0.5deg);"><span style="transform:scaleX(0.9064)">Amplitude [V]:</span></div>
<div class="t" style="left:285px;top:236px;padding-left:0.20px;font-size:7.0px;color:#000;transform:translate3d(0,0.92px,0) rotateX(0.5deg);"><span style="transform:scaleX(0.7936)">10.000</span></div>
<div class="t" style="left:230px;top:250px;padding-left:0.00px;font-size:7.0px;color:#000;transform:translate3d(0,0.07px,0) rotateX(0.5deg);"><span style="transform:scaleX(0.9051)">Wavelength [µm]:</span></div>
<div class="t" style="left:285px;top:250px;padding-left:0.20px;font-size:7.0px;color:#000;transform:translate3d(0,0.12px,0) rotateX(0.5deg);"><span style="transform:scaleX(0.7986)">0.150</span></div>
<div class="t" style="left:235px;top:263px;padding-left:0.80px;font-size:7.0px;color:#000;transform:translate3d(0,0.07px,0) rotateX(0.5deg);"><span style="transform:scaleX(0.8851)">Pulse width [ts]:</span></div>
<div class="t" style="left:285px;top:263px;padding-left:0.20px;font-size:7.0px;color:#8a8a8a;transform:translate3d(0,0.12px,0) rotateX(0.5deg);">1</div>
<div class="t" style="left:25px;top:299px;padding-left:0.00px;font-size:7.0px;color:#000;transform:translate3d(0,0.52px,0) rotateX(0.5deg);"><span style="transform:scaleX(0.8649)">Delete</span></div>
<div class="t" style="left:11px;top:321px;padding-left:0.00px;font-size:7.0px;color:#000;transform:translate3d(0,0.07px,0) rotateX(0.5deg);"><span style="transform:scaleX(0.8870)">Vector objects</span></div>
<div class="t" style="left:55px;top:321px;padding-left:0.80px;font-size:7.0px;color:#000;transform:translate3d(0,0.47px,0) rotateX(0.5deg);"><span style="transform:scaleX(0.8838)">Vector material file</span></div>
<div class="t" style="left:8px;top:334px;padding-left:0.70px;font-size:7.0px;color:#000;transform:translate3d(0,0.67px,0) rotateX(0.5deg);"><span style="transform:scaleX(0.9151)">object</span></div>
<div class="t" style="left:405px;top:334px;padding-left:0.80px;font-size:7.0px;color:#000;transform:translate3d(0,0.67px,0) rotateX(0.5deg);"><span style="transform:scaleX(0.8842)">visible</span></div>
<div class="t" style="left:28px;top:425px;padding-left:0.70px;font-size:7.0px;color:#8a8a8a;transform:translate3d(0,0.92px,0) rotateX(0.5deg);"><span style="transform:scaleX(0.8705)">Edit</span></div>
<div class="t" style="left:79px;top:425px;padding-left:0.70px;font-size:7.0px;color:#8a8a8a;transform:translate3d(0,0.92px,0) rotateX(0.5deg);"><span style="transform:scaleX(0.8402)">Delete</span></div>
<div class="t" style="left:453px;top:295px;padding-left:0.00px;font-size:7.0px;color:#000;transform:translate3d(0,0.67px,0) rotateX(0.5deg);"><span style="transform:scaleX(0.8719)">Show cross-section (image):</span></div>
<div class="t" style="left:769px;top:295px;padding-left:0.70px;font-size:7.0px;color:#000;transform:translate3d(0,0.67px,0) rotateX(0.5deg);"><span style="transform:scaleX(0.8396)">square values</span></div>
<div class="t" style="left:453px;top:311px;padding-left:0.00px;font-size:7.0px;color:#000;transform:translate3d(0,0.67px,0) rotateX(0.5deg);"><span style="transform:scaleX(0.8649)">Show graph:</span></div>
<div class="t" style="left:450px;top:326px;padding-left:0.80px;font-size:6.4px;color:#1c1c1c;font-family:&quot;DejaVu Sans&quot;, sans-serif;transform:translate3d(0,0.07px,0) rotateX(0.5deg);"><span style="transform:scaleX(0.9438)">1.0</span></div>
<div class="t" style="left:451px;top:363px;padding-left:0.00px;font-size:6.4px;color:#1c1c1c;font-family:&quot;DejaVu Sans&quot;, sans-serif;transform:translate3d(0,0.07px,0) rotateX(0.5deg);"><span style="transform:scaleX(0.9438)">0.5</span></div>
<div class="t" style="left:451px;top:399px;padding-left:0.00px;font-size:6.4px;color:#1c1c1c;font-family:&quot;DejaVu Sans&quot;, sans-serif;transform:translate3d(0,0.57px,0) rotateX(0.5deg);"><span style="transform:scaleX(0.9438)">0.0</span></div>
<div class="t" style="left:468px;top:414px;padding-left:0.50px;font-size:6.4px;color:#1c1c1c;font-family:&quot;DejaVu Sans&quot;, sans-serif;transform:translate3d(0,0.07px,0) rotateX(0.5deg);"><span style="transform:scaleX(0.9438)">0.0</span></div>
<div class="t" style="left:574px;top:414px;padding-left:0.80px;font-size:6.4px;color:#1c1c1c;font-family:&quot;DejaVu Sans&quot;, sans-serif;transform:translate3d(0,0.07px,0) rotateX(0.5deg);"><span style="transform:scaleX(0.9438)">0.5</span></div>
<div class="t" style="left:680px;top:414px;padding-left:0.80px;font-size:6.4px;color:#1c1c1c;font-family:&quot;DejaVu Sans&quot;, sans-serif;transform:translate3d(0,0.07px,0) rotateX(0.5deg);"><span style="transform:scaleX(0.9438)">1.0</span></div>
<div class="t" style="left:578px;top:423px;padding-left:0.00px;font-size:6.4px;color:#1c1c1c;font-family:&quot;DejaVu Sans&quot;, sans-serif;transform:translate3d(0,0.87px,0) rotateX(0.5deg);">x</div>
<div class="t" style="left:444px;top:362px;padding-left:0.40px;font-size:6.4px;color:#1c1c1c;font-family:&quot;DejaVu Sans&quot;, sans-serif;transform:translate3d(0,0.97px,0) rotateX(0.5deg) rotate(-90deg);">y</div>
<div class="t" style="left:699px;top:310px;padding-left:0.70px;font-size:7.0px;color:#000;transform:translate3d(0,0.17px,0) rotateX(0.5deg);"><span style="transform:scaleX(0.8772)">GSvit output</span></div>
</div></body></html>
